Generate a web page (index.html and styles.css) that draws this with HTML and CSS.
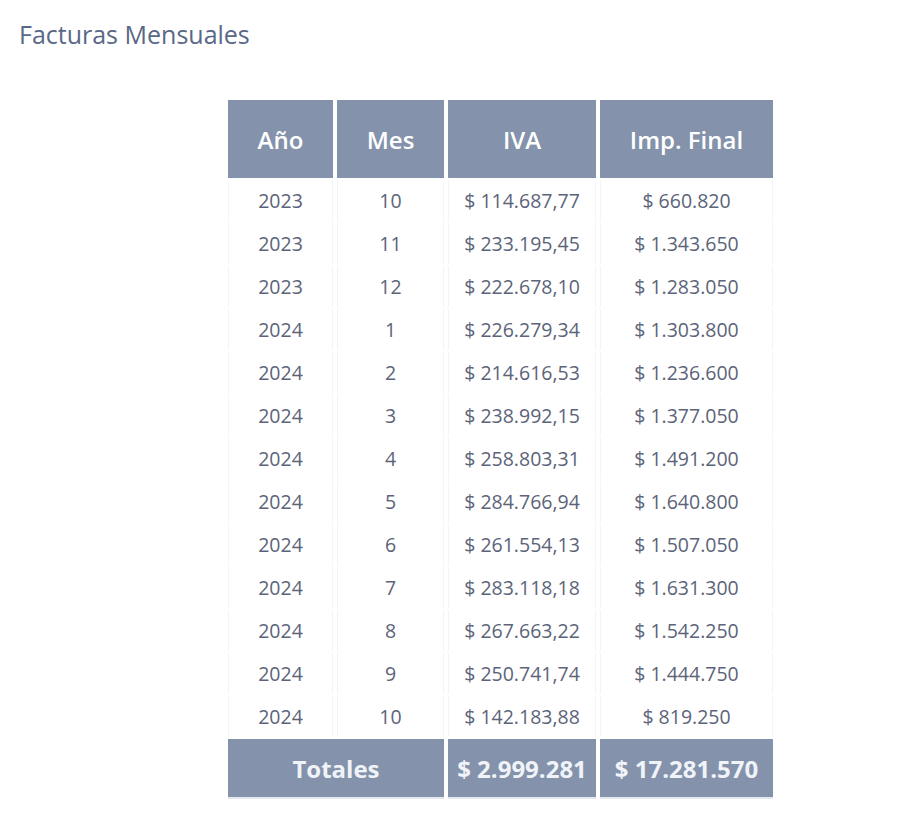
FILE: index.html
```html
<!DOCTYPE html>
<html lang="es">
<head>
<meta charset="utf-8">
<link rel="stylesheet" href="styles.css">
</head>
<body>
<h1 class="title">Facturas Mensuales</h1>
<div class="wrap">
<table class="tbl">
<thead>
<tr><th class="c1">Año</th><th class="c2">Mes</th><th class="c3">IVA</th><th class="c4">Imp. Final</th></tr>
</thead>
<tbody>
<tr><td>2023</td><td>10</td><td>$ 114.687,77</td><td>$ 660.820</td></tr>
<tr><td>2023</td><td>11</td><td>$ 233.195,45</td><td>$ 1.343.650</td></tr>
<tr><td>2023</td><td>12</td><td>$ 222.678,10</td><td>$ 1.283.050</td></tr>
<tr><td>2024</td><td>1</td><td>$ 226.279,34</td><td>$ 1.303.800</td></tr>
<tr><td>2024</td><td>2</td><td>$ 214.616,53</td><td>$ 1.236.600</td></tr>
<tr><td>2024</td><td>3</td><td>$ 238.992,15</td><td>$ 1.377.050</td></tr>
<tr><td>2024</td><td>4</td><td>$ 258.803,31</td><td>$ 1.491.200</td></tr>
<tr><td>2024</td><td>5</td><td>$ 284.766,94</td><td>$ 1.640.800</td></tr>
<tr><td>2024</td><td>6</td><td>$ 261.554,13</td><td>$ 1.507.050</td></tr>
<tr><td>2024</td><td>7</td><td>$ 283.118,18</td><td>$ 1.631.300</td></tr>
<tr><td>2024</td><td>8</td><td>$ 267.663,22</td><td>$ 1.542.250</td></tr>
<tr><td>2024</td><td>9</td><td>$ 250.741,74</td><td>$ 1.444.750</td></tr>
<tr><td>2024</td><td>10</td><td>$ 142.183,88</td><td>$ 819.250</td></tr>
</tbody>
<tfoot>
<tr><td colspan="2">Totales</td><td>$ 2.999.281</td><td>$ 17.281.570</td></tr>
</tfoot>
</table>
</div>
</body>
</html>
```
FILE: styles.css
```css
html, body {
  margin: 0;
  padding: 0;
  background: #ffffff;
  font-family: "Open Sans", "Noto Sans", sans-serif;
}
.title {
  margin: 0;
  padding: 18px 0 0 19px;
  font-size: 25px;
  font-weight: 500;
  line-height: 32px;
  color: #5a6887;
}
.wrap {
  padding: 48px 0 0 224px;
}
.tbl {
  border-collapse: separate;
  border-spacing: 4px 2px;
}
.tbl th {
  background: #8493ab;
  color: #ffffff;
  font-size: 24px;
  font-weight: 600;
  height: 78px;
  padding: 0;
  box-sizing: border-box;
  text-align: center;
}
.c1 { width: 105px; }
.c2 { width: 107px; }
.c3 { width: 148px; }
.c4 { width: 173px; }
.tbl tbody td {
  height: 41px;
  padding: 0;
  text-align: center;
  font-size: 19.5px;
  color: #5c6479;
  border: 1px solid #f4f4f6;
  border-bottom: none;
  border-top: none;
}
.tbl tfoot td {
  background: #8493ab;
  color: #f0f3f8;
  font-size: 24px;
  font-weight: 700;
  height: 58px;
  padding: 0;
  text-align: center;
  border-bottom: 2px solid #e4e8ef;
}
```
